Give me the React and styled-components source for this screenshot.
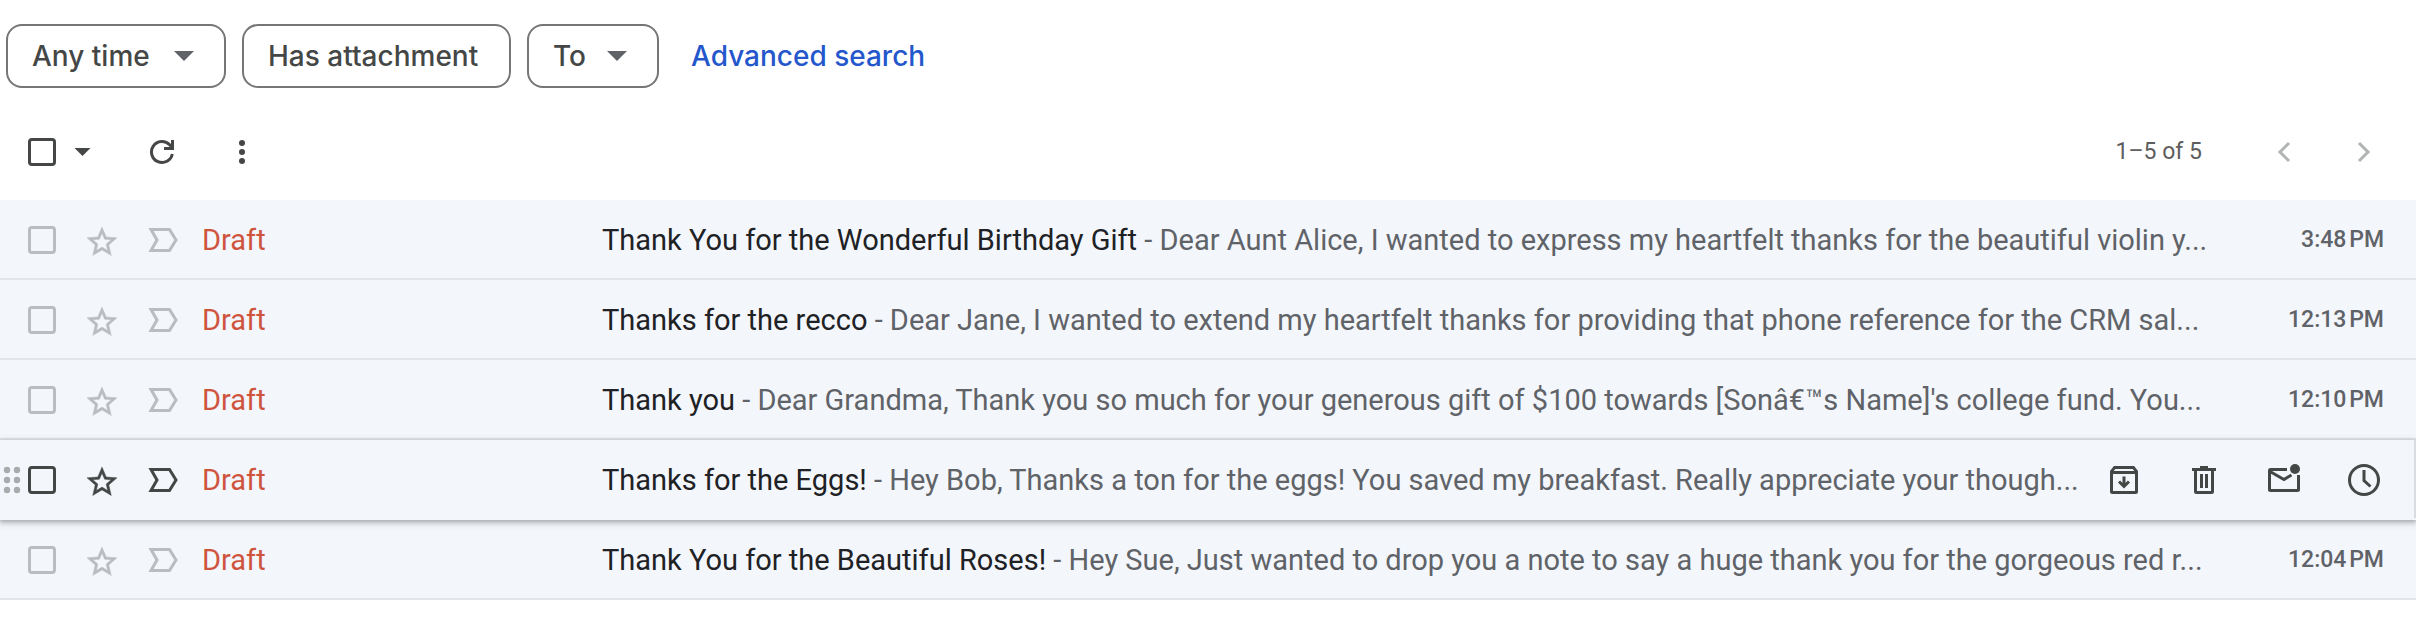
import React from "react";
import styled, { createGlobalStyle, css } from "styled-components";

const GlobalStyle = createGlobalStyle`
  *, *::before, *::after { box-sizing: border-box; }
  body {
    margin: 0;
    background: #fff;
    color: #202124;
    font-family: Roboto, "Liberation Sans", sans-serif;
    font-size: 29px;
    line-height: 40px;
  }
  button { font: inherit; color: inherit; background: none; border: 0; padding: 0; cursor: pointer; }
`;

const Page = styled.main`
  padding-right: 14px;
`;

const Filters = styled.div`
  display: flex;
  align-items: center;
  gap: 16px;
  padding: 24px 6px 0;
  font-family: Inter, Roboto, sans-serif;
  font-size: 28px;
  font-weight: 500;
`;

const Chip = styled.button`
  && {
    display: inline-flex;
    align-items: center;
    justify-content: space-between;
    height: 64px;
    min-width: ${(p) => p.$width}px;
    padding: 0 ${(p) => (p.$menu ? 30 : 24)}px 0 24px;
    border: 2px solid #747775;
    border-radius: 16px;
    color: #444746;
    white-space: nowrap;
  }
`;

const AdvancedLink = styled.a`
  margin-left: 16px;
  color: #2557cc;
  text-decoration: none;
  white-space: nowrap;
`;

const Toolbar = styled.div`
  display: flex;
  align-items: center;
  height: 96px;
  margin-top: 16px;
  padding: 0 12px 0 28px;
  color: #444746;
`;

const ToolGroup = styled.div`
  display: flex;
  gap: 40px;
  margin-left: 6px;
`;

const Pager = styled.div`
  display: flex;
  align-items: center;
  margin-left: auto;
`;

const Count = styled.span`
  margin-right: 42px;
  font-size: 23px;
  color: #5e5e5e;
`;

const Checkbox = styled.input`
  appearance: none;
  flex: none;
  width: 28px;
  height: 28px;
  margin: 0;
  border: 3px solid ${(p) => (p.$strong ? "#444746" : "#b9bdbf")};
  border-radius: 4px;
`;

const IconButton = styled.button`
  && {
    display: flex;
    flex: none;
    align-items: center;
    justify-content: center;
    width: ${(p) => (p.$wide ? 80 : 40)}px;
    height: 40px;
    color: ${(p) => p.$tone || "#444746"};
  }
`;

const List = styled.table`
  display: block;
  overflow: hidden;
  background: #f3f6fb;
`;

const Rows = styled.tbody`
  display: block;
`;

const Row = styled.tr`
  display: flex;
  align-items: center;
  height: 80px;
  padding-top: 2px;
  border-bottom: 2px solid #e2e5ea;
  ${(p) =>
    p.$active &&
    css`
      position: relative;
      border-bottom-color: transparent;
      box-shadow: inset -2px 0 0 #d9dce0, 0 2px 4px 0 rgba(60, 64, 67, 0.3),
        0 2px 6px 2px rgba(60, 64, 67, 0.15);
    `}
`;

const Cell = styled.td`
  display: flex;
  align-items: center;
  flex: none;
  padding: 0;
`;

const HandleCell = styled(Cell)`
  width: 28px;
`;

const MarkCell = styled(Cell)`
  width: 174px;
  gap: 20px;
`;

const MarkBox = styled(Checkbox)`
  margin-right: 6px;
`;

const SenderCell = styled(Cell)`
  width: 400px;
  color: #cf543d;
`;

const TextCell = styled.td`
  flex: 1;
  min-width: 0;
  padding: 0;
  overflow: hidden;
  white-space: nowrap;
  color: #5f6368;
`;

const Subject = styled.span`
  color: #202124;
`;

const TimeCell = styled(Cell)`
  justify-content: flex-end;
  width: 200px;
  padding-right: 32px;
  color: #5f6368;
  font-size: 23px;
  font-weight: 500;
`;

const ActionCell = styled(Cell)`
  padding-right: 12px;
`;

function Glyph({ children }) {
  return (
    <svg width="40" height="40" viewBox="0 0 40 40" fill="none" stroke="currentColor" strokeWidth="3" aria-hidden="true">
      {children}
    </svg>
  );
}

const ChipArrow = () => (
  <svg width="20" height="10" viewBox="0 0 20 10" fill="#5f6368" aria-hidden="true">
    <path d="M0 0h20L10 10z" />
  </svg>
);

const SmallArrow = () => (
  <Glyph><path d="M12.5 16h16l-8 8z" fill="currentColor" stroke="none" /></Glyph>
);

const Refresh = () => (
  <Glyph>
    <path d="M30.3 22A10.5 10.5 0 1 1 27.6 12.8L30 15.3" />
    <path d="M32 8v10H22v-3h7V8z" fill="currentColor" stroke="none" />
  </Glyph>
);

const More = () => (
  <Glyph>
    <g fill="currentColor" stroke="none">
      <circle cx="20" cy="11" r="3" /><circle cx="20" cy="20" r="3" /><circle cx="20" cy="29" r="3" />
    </g>
  </Glyph>
);

const Previous = () => <Glyph><path d="M25 11l-9 9 9 9" /></Glyph>;
const Next = () => <Glyph><path d="M15 11l9 9-9 9" /></Glyph>;

const Star = () => (
  <Glyph>
    <path
      transform="translate(2 4) scale(1.5)"
      fill="currentColor"
      stroke="currentColor"
      strokeWidth="0.3"
      d="M22 9.24l-7.19-.62L12 2 9.19 8.63 2 9.24l5.46 4.73L5.82 21 12 17.27 18.18 21l-1.63-7.03L22 9.24zM12 15.4l-3.76 2.27 1-4.28-3.32-2.88 4.38-.38L12 6.1l1.71 4.04 4.38.38-3.32 2.88 1 4.28L12 15.4z"
    />
  </Glyph>
);

const Important = () => <Glyph><path d="M9 9.5H27.5L34 20 27.5 30.5H9L15 20z" /></Glyph>;

const Archive = () => (
  <Glyph>
    <path d="M7.5 12.5V31.5a1 1 0 0 0 1 1h23a1 1 0 0 0 1-1V12.5M7.5 12.5V11.4L10.6 7.5H29.4L32.5 11.4V12.5M7.5 12.5H32.5" />
    <path d="M20 16.5v9.5M15 21.5l5 5 5-5" />
  </Glyph>
);

const Trash = () => (
  <Glyph>
    <path d="M8 9.5H32M16 7.5h8M11.5 10V31.5a1 1 0 0 0 1 1h15a1 1 0 0 0 1-1V10M17.5 14v14M22.5 14v14" />
  </Glyph>
);

const Unread = () => (
  <Glyph>
    <path d="M23 9.5H6.5a1 1 0 0 0-1 1V29.5a1 1 0 0 0 1 1h27a1 1 0 0 0 1-1V15M6 11.5L20 19.5 27.5 15" />
    <circle cx="31" cy="9" r="5" fill="currentColor" stroke="none" />
  </Glyph>
);

const Snooze = () => (
  <Glyph>
    <circle cx="20" cy="20" r="14.5" />
    <path d="M20 10v10.5l6.5 6" />
  </Glyph>
);

const Handle = () => (
  <svg width="24" height="40" viewBox="0 0 24 40" fill="#a9abad" aria-hidden="true">
    {[10, 20, 30].map((y) => (
      <g key={y}><circle cx="7" cy={y} r="3.2" /><circle cx="17" cy={y} r="3.2" /></g>
    ))}
  </svg>
);

const drafts = [
  { subject: "Thank You for the Wonderful Birthday Gift", snippet: "Dear Aunt Alice, I wanted to express my heartfelt thanks for the beautiful violin y...", time: "3:48\u202fPM" },
  { subject: "Thanks for the recco", snippet: "Dear Jane, I wanted to extend my heartfelt thanks for providing that phone reference for the CRM sal...", time: "12:13\u202fPM" },
  { subject: "Thank you", snippet: "Dear Grandma, Thank you so much for your generous gift of $100 towards [Sonâ€™s Name]'s college fund. You...", time: "12:10\u202fPM" },
  { subject: "Thanks for the Eggs!", snippet: "Hey Bob, Thanks a ton for the eggs! You saved my breakfast. Really appreciate your though...", active: true },
  { subject: "Thank You for the Beautiful Roses!", snippet: "Hey Sue, Just wanted to drop you a note to say a huge thank you for the gorgeous red r...", time: "12:04\u202fPM" },
];

const actions = [
  ["Archive", Archive],
  ["Delete", Trash],
  ["Mark as unread", Unread],
  ["Snooze", Snooze],
];

function DraftRow({ subject, snippet, time, active }) {
  const tone = active ? "#444746" : "#b9bdbf";
  return (
    <Row $active={active}>
      <HandleCell>{active && <Handle />}</HandleCell>
      <MarkCell>
        <MarkBox type="checkbox" aria-label={`Select ${subject}`} $strong={active} />
        <IconButton aria-label="Star" $tone={tone}><Star /></IconButton>
        <IconButton aria-label="Mark as important" $tone={tone}><Important /></IconButton>
      </MarkCell>
      <SenderCell>Draft</SenderCell>
      <TextCell><Subject>{subject}</Subject> - {snippet}</TextCell>
      {active ? (
        <ActionCell>
          {actions.map(([label, Icon]) => (
            <IconButton key={label} aria-label={label} $wide><Icon /></IconButton>
          ))}
        </ActionCell>
      ) : (
        <TimeCell>{time}</TimeCell>
      )}
    </Row>
  );
}

export default function App() {
  return (
    <Page>
      <GlobalStyle />
      <Filters>
        <Chip $menu $width={220}>Any time <ChipArrow /></Chip>
        <Chip $width={269}>Has attachment</Chip>
        <Chip $menu $width={132}>To <ChipArrow /></Chip>
        <AdvancedLink href="#advanced">Advanced search</AdvancedLink>
      </Filters>
      <Toolbar>
        <Checkbox type="checkbox" aria-label="Select all" $strong />
        <ToolGroup>
          <IconButton aria-label="Select options"><SmallArrow /></IconButton>
          <IconButton aria-label="Refresh"><Refresh /></IconButton>
          <IconButton aria-label="More"><More /></IconButton>
        </ToolGroup>
        <Pager>
          <Count>1–5 of 5</Count>
          <IconButton aria-label="Newer" $wide $tone="#b2b3b3"><Previous /></IconButton>
          <IconButton aria-label="Older" $wide $tone="#b2b3b3"><Next /></IconButton>
        </Pager>
      </Toolbar>
      <List>
        <Rows>
          {drafts.map((draft) => <DraftRow key={draft.subject} {...draft} />)}
        </Rows>
      </List>
    </Page>
  );
}
